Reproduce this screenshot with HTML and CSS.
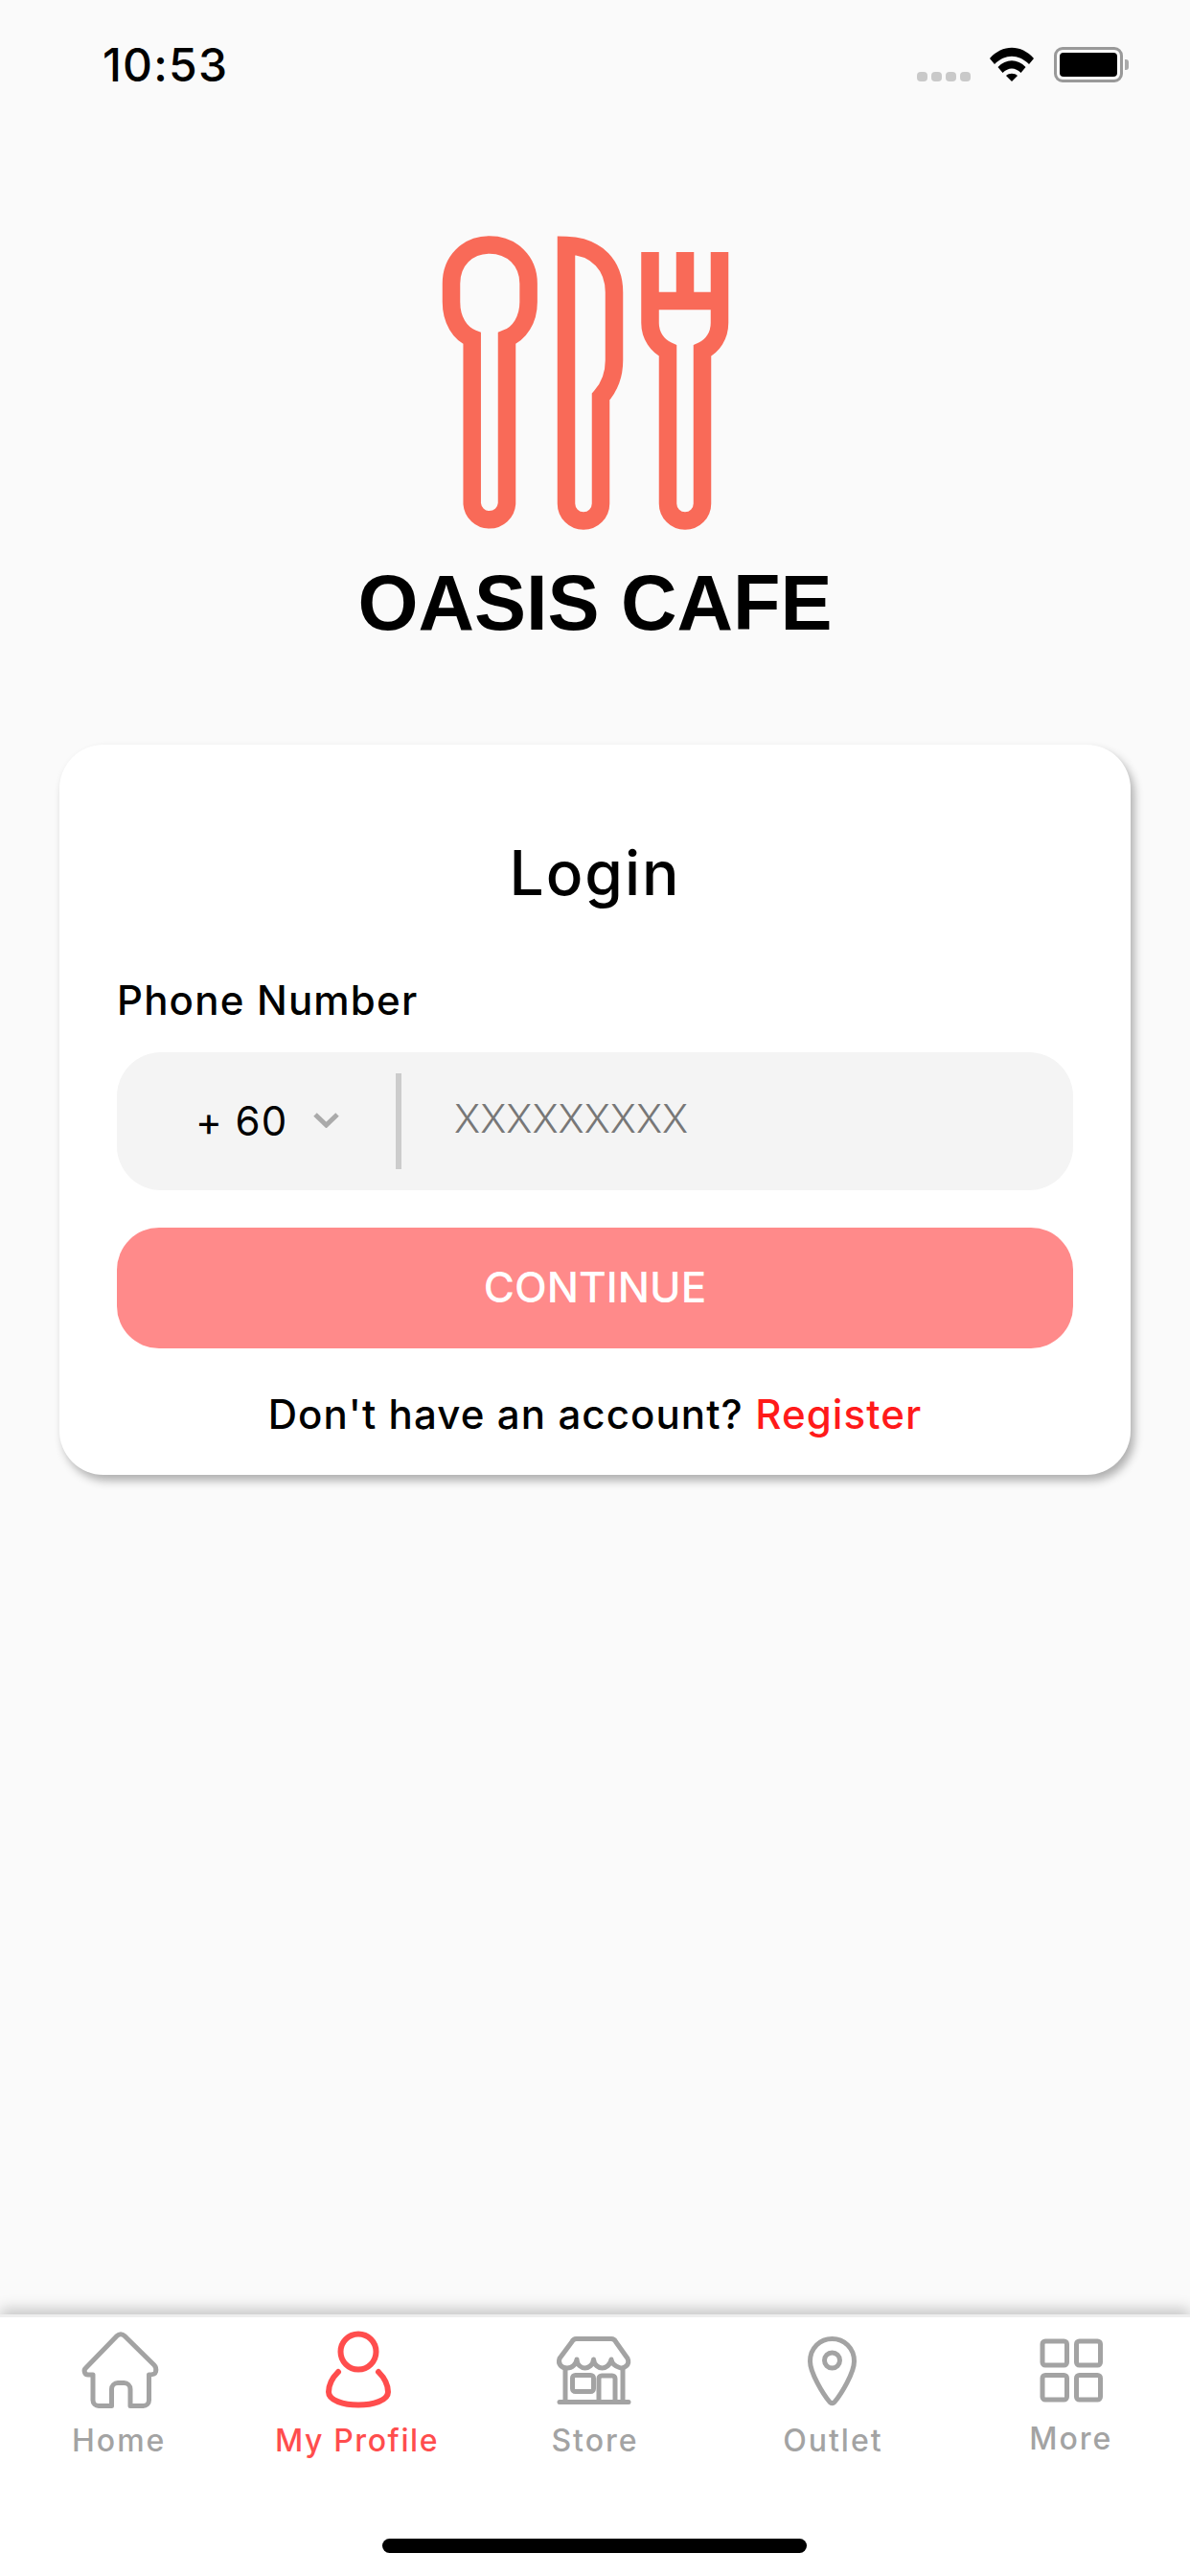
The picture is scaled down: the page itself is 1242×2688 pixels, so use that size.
FILE: index.html
```html
<!DOCTYPE html>
<html>
<head>
	<title>Oasis Cafe - Login</title>
	<link rel="stylesheet" href="styles.css">
</head>
<body>
	<div class="page">
		<div class="status-bar">
			<span class="status-time">10:53</span>
			<div class="status-icons">
				<div class="signal-dots">
					<span></span><span></span><span></span><span></span>
				</div>
				<svg class="wifi" width="48" height="36" viewBox="0 0 48 36">
					<path d="M1 12 C14 -3 34 -3 47 12 L42 18 C31 7 17 7 6 18 Z"/>
					<path d="M9.5 21 C18 12 30 12 38.5 21 L33.5 27 C27.5 21 20.5 21 14.5 27 Z"/>
					<path d="M18 30 C21 27 27 27 30 30 L24 36 Z"/>
				</svg>
				<div class="battery">
					<div class="battery-body"><div class="battery-level"></div></div>
					<div class="battery-nub"></div>
				</div>
			</div>
		</div>

		<div class="main">
			<div class="brand">
				<svg class="brand-logo" width="342" height="320" viewBox="450 240 342 320">
					<!-- spoon -->
					<path d="M492.7 353 V525.5 A18.2 18.2 0 0 0 529 525.5 V353 C542 348 551.6 334 551.6 315 V296 C551.6 272 534 255.5 511 255.5 C488 255.5 471 272 471 296 V315 C471 334 480 348 492.7 353 Z"/>
					<!-- knife -->
					<path d="M591 256 V525.5 A18 18 0 0 0 627 525.5 V414 C636 404 641 390 641 376 V305 C641 278 624 257 591 256 Z"/>
					<!-- fork -->
					<path d="M678.5 263 V337 C678.5 350 686 361 697 366 V525.5 A18 18 0 0 0 733 525.5 V366 C744 361 751 350 751 337 V263 M715 263 V314 M678.5 314 H751"/>
				</svg>
				<div class="brand-name">OASIS CAFE</div>
			</div>

			<div class="card">
				<div class="card-title">Login</div>
				<label class="field-label">Phone Number</label>
				<div class="phone-field">
					<div class="country-code">
						<span>+ 60</span>
						<svg width="27" height="16" viewBox="0 0 27 16">
							<path d="M2 2 L13.5 13 L25 2"/>
						</svg>
					</div>
					<div class="phone-divider"></div>
					<input class="phone-input" type="text" placeholder="XXXXXXXXX">
				</div>
				<button class="continue-btn">CONTINUE</button>
				<div class="register-row">Don't have an account? <a class="register-link">Register</a></div>
			</div>
		</div>

		<div class="tab-bar">
			<div class="tab">
				<svg class="tab-icon" viewBox="0 0 100 86">
					<path d="M42.5 80.5 H29 a6 6 0 0 1 -6 -6 V48 H18 C14 48 13 43 15.5 41 L48 7.5 C50.5 5 53.5 5 56 7.5 L87 38 C89 40 89 43 88.5 45 C88 47 86 48 81.5 48 V74.5 a6 6 0 0 1 -6 6 H62 V63 a6.5 6.5 0 0 0 -6.5 -6.5 H49 a6.5 6.5 0 0 0 -6.5 6.5 Z"/>
				</svg>
				<span class="tab-label">Home</span>
			</div>
			<div class="tab active">
				<svg class="tab-icon" viewBox="0 0 100 86">
					<circle cx="51" cy="24" r="18.5"/>
					<path d="M30 45 C24 51 20 58 20 66 C20 75 36 79.5 51 79.5 C66 79.5 82 75 82 66 C82 58 78 51 72 45"/>
				</svg>
				<span class="tab-label">My Profile</span>
			</div>
			<div class="tab">
				<svg class="tab-icon" viewBox="0 0 100 86">
					<path d="M31 10.5 H67 a5 5 0 0 1 4.6 3 L84 31 C87 38 80 42 75.5 40.5 C71 39 67.5 36 67 32 C66 38 61 41 57.5 41 C54 41 49 38 48.5 32 C48 38 43 41 39.5 41 C36 41 31 38 31 32 C30.5 37 26 41 21 41 C15 41 11 37 13 31 L26 13.5 a5 5 0 0 1 5 -3 Z"/>
					<path d="M19 43 V76 M79 43 V76 M13 76.5 H85"/>
					<rect x="26.5" y="48.5" width="22" height="17" rx="3"/>
					<path d="M54 76 V52 a3 3 0 0 1 3 -3 H68 a3 3 0 0 1 3 3 V76"/>
				</svg>
				<span class="tab-label">Store</span>
			</div>
			<div class="tab">
				<svg class="tab-icon" viewBox="0 0 100 86">
					<path d="M49.5 10.5 C37 10.5 26.5 20 26.5 34 C26.5 46 40 68 47 76.5 C48.5 78 50.5 78 52 76.5 C59 68 72.5 46 72.5 34 C72.5 20 62 10.5 49.5 10.5 Z"/>
					<circle cx="49.5" cy="33" r="8"/>
				</svg>
				<span class="tab-label">Outlet</span>
			</div>
			<div class="tab">
				<svg class="tab-icon" viewBox="0 0 100 86">
					<rect x="20" y="13" width="25.5" height="25" rx="3"/>
					<rect x="55.5" y="13" width="25" height="25" rx="3"/>
					<rect x="20" y="48.5" width="25.5" height="25.5" rx="3"/>
					<rect x="55.5" y="48.5" width="25" height="25.5" rx="3"/>
				</svg>
				<span class="tab-label tab-label-more">More</span>
			</div>
			<div class="home-indicator"></div>
		</div>
	</div>
</body>
</html>
```

FILE: styles.css
```css
* {
	box-sizing: border-box;
}

body {
	margin: 0;
	background: #fafafa;
	font-family: Inter, "Noto Sans", sans-serif;
	color: #000;
}

.page {
	width: 1242px;
	height: 2688px;
	display: flex;
	flex-direction: column;
	overflow: hidden;
}

/* status bar */
.status-bar {
	height: 130px;
	flex-shrink: 0;
	display: flex;
	justify-content: space-between;
	align-items: flex-start;
	padding: 40px 64px 0 107px;
}

.status-time {
	font-size: 48px;
	line-height: 56px;
	font-weight: 500;
	letter-spacing: 1.2px;
}

.status-icons {
	display: flex;
	align-items: flex-start;
	padding-top: 9px;
}

.signal-dots {
	display: flex;
	gap: 4px;
	margin-top: 26px;
	margin-right: 19px;
}

.signal-dots span {
	width: 11px;
	height: 10px;
	border-radius: 4px;
	background: #c9c9c9;
}

.wifi {
	fill: #000;
	margin-right: 20px;
}

.battery {
	display: flex;
	align-items: center;
}

.battery-body {
	width: 72px;
	height: 37px;
	border: 3px solid #999;
	border-radius: 9px;
	padding: 3px;
}

.battery-level {
	height: 100%;
	background: #000;
	border-radius: 4px;
}

.battery-nub {
	width: 4px;
	height: 11px;
	margin-left: 2px;
	background: #aaa;
	border-radius: 0 3px 3px 0;
}

/* logo and name */
.main {
	flex: 1;
	display: flex;
	flex-direction: column;
}

.brand {
	display: flex;
	flex-direction: column;
	align-items: center;
	padding-top: 110px;
}

.brand-logo {
	display: block;
	fill: none;
	stroke: #f96a58;
	stroke-width: 18.5;
	stroke-miterlimit: 8;
}

.brand-name {
	margin-top: 29px;
	font-family: "Liberation Sans", Arial, sans-serif;
	font-weight: 700;
	font-size: 81px;
	line-height: 80px;
}

/* login card */
.card {
	height: 762px;
	margin: 108px 62px 0;
	padding: 94px 60px 0;
	background: #fff;
	border-radius: 46px;
	box-shadow: 4px 6px 10px rgba(0, 0, 0, 0.3);
}

.card-title {
	font-size: 64px;
	line-height: 80px;
	font-weight: 500;
	letter-spacing: 2px;
	text-align: center;
}

.field-label {
	display: block;
	margin-top: 66px;
	font-size: 42px;
	line-height: 54px;
	font-weight: 500;
	letter-spacing: 1.2px;
}

.phone-field {
	height: 144px;
	margin-top: 27px;
	display: flex;
	align-items: center;
	background: #f4f4f4;
	border-radius: 46px;
}

.country-code {
	width: 291px;
	display: flex;
	align-items: center;
	padding-left: 82px;
	padding-bottom: 2px;
	font-size: 42px;
	letter-spacing: 1px;
}

.country-code svg {
	margin-left: 27px;
	fill: none;
	stroke: #aaa;
	stroke-width: 5;
}

.phone-divider {
	width: 6px;
	height: 100px;
	background: #ccc;
}

.phone-input {
	flex: 1;
	min-width: 0;
	margin-left: 55px;
	padding: 0 0 6px;
	border: none;
	outline: none;
	background: none;
	font-family: inherit;
	font-size: 41px;
	font-weight: 300;
}

.phone-input::placeholder {
	color: #777;
	opacity: 1;
}

.continue-btn {
	display: block;
	width: 100%;
	height: 126px;
	margin-top: 39px;
	padding-bottom: 4px;
	border: none;
	border-radius: 44px;
	background: #ff8a8a;
	color: #fff;
	font-family: inherit;
	font-size: 44px;
	font-weight: 500;
}

.register-row {
	margin-top: 39px;
	font-size: 42px;
	line-height: 60px;
	font-weight: 500;
	letter-spacing: 1.1px;
	text-align: center;
}

.register-link {
	color: #ff1a1a;
}

/* bottom tabs */
.tab-bar {
	position: relative;
	height: 273px;
	flex-shrink: 0;
	display: grid;
	grid-template-columns: repeat(5, 1fr);
	align-items: start;
	padding-top: 12px;
	background: #fff;
	border-top: 3px solid #eee;
	box-shadow: 0 -6px 14px rgba(0, 0, 0, 0.2);
}

.tab {
	display: flex;
	flex-direction: column;
	align-items: center;
}

.tab-icon {
	width: 100px;
	height: 86px;
	fill: none;
	stroke: #a3a3a3;
	stroke-width: 5;
	stroke-linecap: round;
	stroke-linejoin: round;
}

.tab-label {
	margin-top: 11px;
	font-size: 32px;
	line-height: 40px;
	letter-spacing: 2px;
	color: #a3a3a3;
	font-weight: 500;
}

.tab-label-more {
	margin-top: 9px;
}

.tab.active .tab-icon {
	stroke: #ff4d4d;
	stroke-width: 6;
}

.tab.active .tab-label {
	color: #ff4d4d;
	letter-spacing: 1.6px;
}

.home-indicator {
	position: absolute;
	left: 399px;
	top: 231px;
	width: 443px;
	height: 15px;
	border-radius: 8px;
	background: #000;
}
```
